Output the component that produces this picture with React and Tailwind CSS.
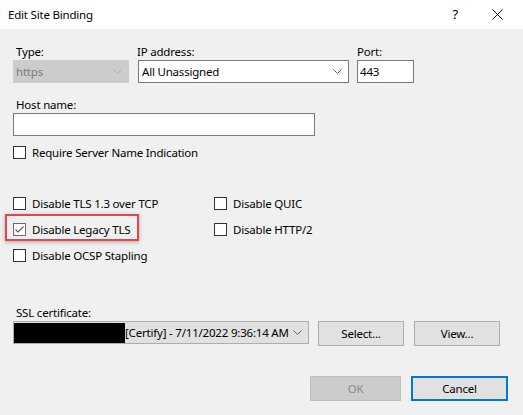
import { useState } from "react";

const Chevron = ({ color = "#606060" }) => (
  <svg width="9" height="5" viewBox="0 0 9 5" className="shrink-0">
    <polyline points="0.5,0.5 4.5,4.5 8.5,0.5" fill="none" stroke={color} strokeWidth="1" />
  </svg>
);

const CheckBox = ({ label, checked, dim }) => (
  <div className="flex items-center h-[13px]">
    <div
      className={`w-[13px] h-[13px] bg-white border shrink-0 flex items-center justify-center ${
        dim ? "border-[#6a6a6a]" : "border-[#333333]"
      }`}
    >
      {checked && (
        <svg width="11" height="11" viewBox="0 0 11 11">
          <polyline points="1.5,5.5 4,8 9.5,2.5" fill="none" stroke="#555555" strokeWidth="1.1" />
        </svg>
      )}
    </div>
    <span className="ml-[6px] leading-[13px] whitespace-nowrap">{label}</span>
  </div>
);

const Button = ({ children, className = "" }) => (
  <button className={`h-[25px] flex items-center justify-center leading-none ${className}`}>{children}</button>
);

export default function App() {
  const [host, setHost] = useState("");

  return (
    <div
      className="w-[523px] h-[415px] bg-[#f0f0f0] text-[11.5px] tracking-[-0.2px] text-black flex flex-col overflow-hidden"
      style={{ fontFamily: "'Noto Sans', 'Open Sans', sans-serif" }}
    >
      {/* title bar */}
      <div className="h-[29px] bg-white flex items-center pl-[8px] shrink-0">
        <span>Edit Site Binding</span>
        <span className="ml-auto mr-[34px] text-[13px]">?</span>
        <svg width="11" height="11" viewBox="0 0 11 11" className="mr-[20px]">
          <path d="M0.5 0.5 L10.5 10.5 M10.5 0.5 L0.5 10.5" stroke="#111" strokeWidth="1" />
        </svg>
      </div>

      <div className="pl-[13px] pt-[15px] flex flex-col">
        {/* type / ip / port */}
        <div className="flex">
          <div className="w-[116px]">
            <div className="h-[16px] leading-[16px] pl-[3px]">Type:</div>
            <div className="h-[23px] bg-[#cccccc] border border-[#cccccc] flex items-center pl-[2px] pr-[6px] text-[#7a7a7a]">
              <span>https</span>
              <span className="ml-auto">
                <Chevron color="#b0b0b0" />
              </span>
            </div>
          </div>
          <div className="w-[211px] ml-[9px]">
            <div className="h-[16px] leading-[16px] -ml-[1px]">IP address:</div>
            <div className="h-[23px] bg-white border border-[#7a7a7a] flex items-center pl-[3px] pr-[6px]">
              <span>All Unassigned</span>
              <span className="ml-auto">
                <Chevron />
              </span>
            </div>
          </div>
          <div className="w-[57px] ml-[8px]">
            <div className="h-[16px] leading-[16px]">Port:</div>
            <div className="h-[23px] bg-white border border-[#7a7a7a] flex items-center pl-[2px]">443</div>
          </div>
        </div>

        {/* host name */}
        <div className="h-[16px] leading-[16px] pl-[3px] mt-[14px]">Host name:</div>
        <input
          value={host}
          onChange={(e) => setHost(e.target.value)}
          className="w-[302px] h-[23px] bg-white border border-[#7a7a7a] outline-none px-[3px]"
        />
        <div className="mt-[10px]">
          <CheckBox label="Require Server Name Indication" />
        </div>

        {/* protocol options */}
        <div className="mt-[38px] grid grid-cols-[201px_auto] gap-y-[13px]">
          <CheckBox label="Disable TLS 1.3 over TCP" />
          <CheckBox label="Disable QUIC" />
          <div className="relative">
            <div className="absolute -left-[8px] -top-[9px] w-[134px] h-[27px] border-2 border-[#e8434a] shadow-[0_1px_4px_rgba(0,0,0,0.3)]" />
            <CheckBox label="Disable Legacy TLS" checked dim />
          </div>
          <CheckBox label="Disable HTTP/2" />
          <CheckBox label="Disable OCSP Stapling" />
        </div>

        {/* certificate */}
        <div className="h-[16px] leading-[16px] pl-[3px] mt-[43px]">SSL certificate:</div>
        <div className="flex items-start">
          <div className="w-[296px] h-[23px] bg-[#e1e1e1] border border-[#adadad] flex items-center pr-[6px] overflow-hidden">
            <div className="w-[112px] h-[20px] bg-black shrink-0 -ml-[1px]" />
            <span className="whitespace-nowrap overflow-hidden flex-1">[Certify] - 7/11/2022 9:36:14 AM</span>
            <span className="ml-[4px]">
              <Chevron />
            </span>
          </div>
          <Button className="w-[86px] ml-[9px] bg-[#e1e1e1] border border-[#adadad]">Select...</Button>
          <Button className="w-[86px] ml-[10px] bg-[#e1e1e1] border border-[#adadad]">View...</Button>
        </div>

        {/* dialog buttons */}
        <div className="flex justify-end mt-[30px] pr-[15px]">
          <Button className="w-[91px] bg-[#cccccc] border border-[#bfbfbf] text-[#8a8a8a]">OK</Button>
          <Button className="w-[97px] ml-[10px] bg-[#e1e1e1] border-2 border-[#0078d7]">Cancel</Button>
        </div>
      </div>
    </div>
  );
}
